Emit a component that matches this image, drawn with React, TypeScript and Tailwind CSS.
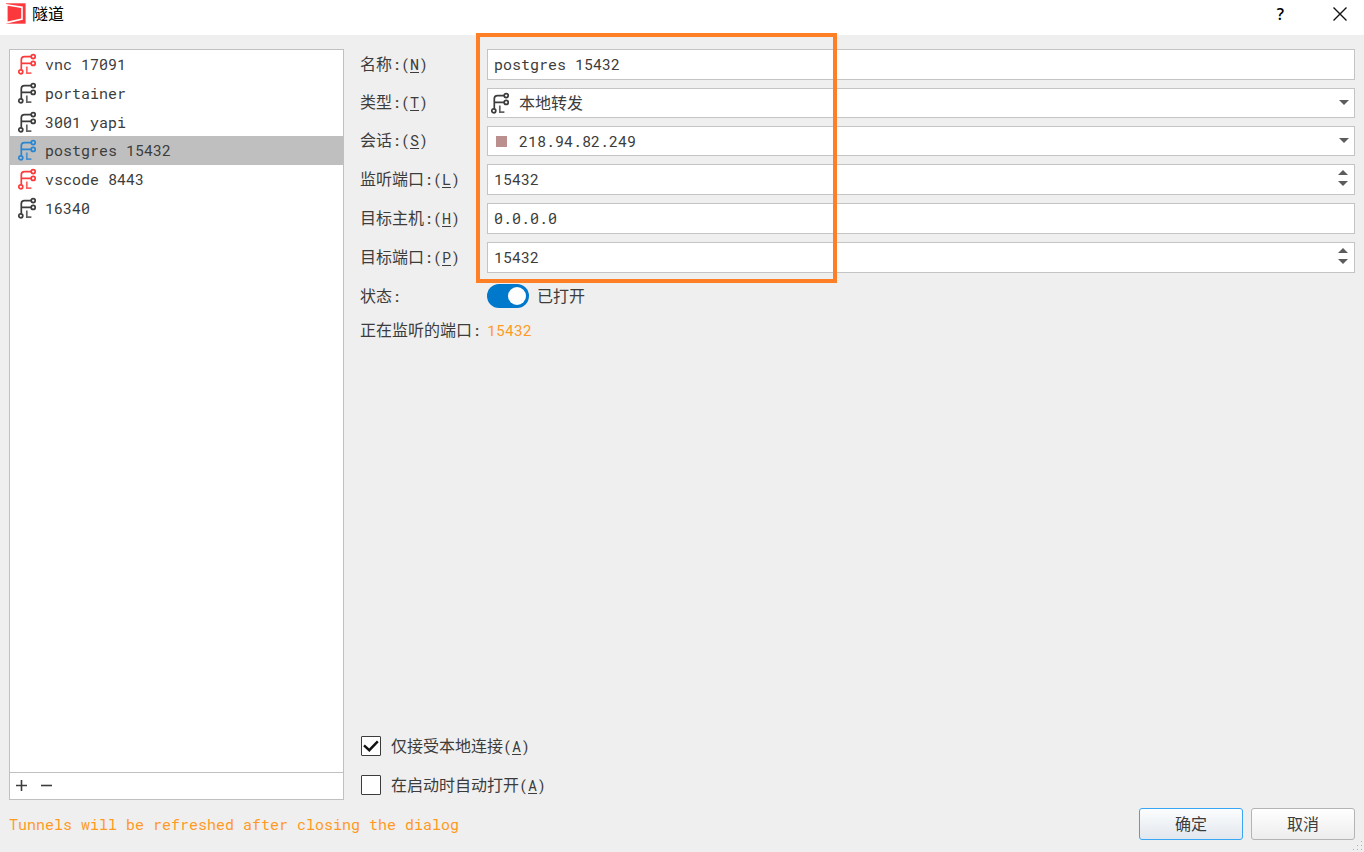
import { useState, type ReactNode } from "react";

type Tunnel = { name: string; color: string };

const tunnels: Tunnel[] = [
  { name: "vnc 17091", color: "text-[#fb3b3b]" },
  { name: "portainer", color: "text-[#3c3c3c]" },
  { name: "3001 yapi", color: "text-[#3c3c3c]" },
  { name: "postgres 15432", color: "text-[#2a86d2]" },
  { name: "vscode 8443", color: "text-[#fb3b3b]" },
  { name: "16340", color: "text-[#3c3c3c]" },
];

function TunnelIcon({ className }: { className: string }) {
  return (
    <svg viewBox="0 0 20 22" className={`h-[22px] w-5 shrink-0 ${className}`} fill="none" stroke="currentColor" strokeWidth="1.7" aria-hidden="true">
      <circle cx="15.2" cy="3.6" r="2" />
      <circle cx="15.2" cy="10.4" r="2" />
      <circle cx="2.8" cy="18.8" r="2" />
      <path d="M13.2 3.6H6.5Q3.3 3.6 3.3 6.8V16.8M3.3 10.4H13.2" />
      <path d="M8.8 13.4V20.2H13.4" strokeOpacity=".8" />
    </svg>
  );
}

function Arrow({ up = false }: { up?: boolean }) {
  return (
    <svg viewBox="0 0 10 5" className="h-[5px] w-[10px]" fill="#5c5c5c" aria-hidden="true">
      <path d={up ? "M0 5L5 0L10 5Z" : "M0 0L5 5L10 0Z"} />
    </svg>
  );
}

function Han({ children }: { children: ReactNode }) {
  return <span className="text-base leading-5">{children}</span>;
}

function Label({ id, text, mnemonic }: { id: string; text: string; mnemonic: string }) {
  return (
    <label htmlFor={id} className="pb-0.5 leading-5 whitespace-nowrap">
      <Han>{text}</Han>:(<span className="underline underline-offset-2">{mnemonic}</span>)
    </label>
  );
}

const box = "w-full min-w-0 border border-[#c4c4c4] bg-white text-[#3c3c3c] outline-none";

function TextField({ id, value }: { id: string; value: string }) {
  return <input id={id} defaultValue={value} className={`${box} h-[31px] px-[6px] pb-0.5`} />;
}

function SpinField({ id, value }: { id: string; value: number }) {
  const [port, setPort] = useState(String(value));
  const step = (by: number) => setPort(String(Number(port) + by));
  return (
    <div className={`${box} flex h-[31px] items-center pr-[6px]`}>
      <input id={id} inputMode="numeric" value={port} onChange={(e) => setPort(e.target.value)} className="min-w-0 flex-1 px-[6px] pb-0.5 outline-none" />
      <div className="flex flex-col gap-[6px] pb-1">
        <button type="button" aria-label="+1" onClick={() => step(1)}><Arrow up /></button>
        <button type="button" aria-label="-1" onClick={() => step(-1)}><Arrow /></button>
      </div>
    </div>
  );
}

function SelectField({ id, icon, value, large }: { id: string; icon: ReactNode; value: string; large?: boolean }) {
  return (
    <div className="relative flex items-center">
      <select id={id} className={`${box} h-[30px] appearance-none pr-6 pl-[31px] ${large ? "text-base" : ""}`}>
        <option>{value}</option>
      </select>
      <span className="pointer-events-none absolute left-1">{icon}</span>
      <span className="pointer-events-none absolute right-[6px] pb-0.5"><Arrow /></span>
    </div>
  );
}

function CheckField({ id, text, checked }: { id: string; text: string; checked: boolean }) {
  return (
    <div className="flex items-center gap-[10px]">
      <span className="relative flex size-5">
        <input id={id} type="checkbox" defaultChecked={checked} className="peer size-5 appearance-none rounded-[1px] border border-[#3c3c3c] bg-white" />
        <svg viewBox="0 0 20 20" className="pointer-events-none absolute inset-0 hidden size-5 peer-checked:block" fill="none" stroke="#111" strokeWidth="2.4" aria-hidden="true">
          <path d="M3 9.3L8.3 14.2L16.8 5.3" />
        </svg>
      </span>
      <label htmlFor={id} className="leading-5">
        <Han>{text}</Han>(<span className="underline underline-offset-2">A</span>)
      </label>
    </div>
  );
}

export default function App() {
  const [selected, setSelected] = useState(3);
  const [open, setOpen] = useState(true);

  return (
    <div className="flex min-h-screen flex-col bg-[#efefef] font-['Roboto_Mono','Liberation_Mono','Noto_Sans_CJK_SC',monospace] text-[15px] leading-5 text-[#3c3c3c]">
      <header className="flex h-[35px] items-center bg-white pb-2 pl-[6px] text-black">
        <svg viewBox="0 0 20 21" className="h-[21px] w-5" aria-hidden="true">
          <path d="M0 .3H19.6V20.7H0Z" fill="#fb383c" />
          <path d="M0 1L16.8 3.6V16.8L0 20.7Z" fill="#fff" />
          <path d="M1.6 2.8L15.2 4.9V15.6L1.6 18.6Z" fill="#fb383c" />
        </svg>
        <h1 className="ml-[6px] flex-1 text-base">隧道</h1>
        <button type="button" aria-label="帮助" className="w-[59px] text-center font-['Open_Sans',sans-serif] text-base font-semibold">?</button>
        <button type="button" aria-label="关闭" className="mr-[-5px] flex w-[59px] justify-center">
          <svg viewBox="0 0 14 14" className="size-[14px]" stroke="#111" strokeWidth="1.4" aria-hidden="true">
            <path d="M.5 .5L13.5 13.5M13.5 .5L.5 13.5" />
          </svg>
        </button>
      </header>

      <main className="flex flex-1 gap-4 px-[9px] pt-[14px]">
        <section className="flex w-[335px] shrink-0 flex-col border border-[#c0c0c0] bg-white">
          <ul className="grid h-[172px] grid-rows-6">
            {tunnels.map((t, i) => (
              <li key={t.name} className="flex">
                <button type="button" onClick={() => setSelected(i)} className={`flex flex-1 items-center gap-[7px] pl-2 text-left ${i === selected ? "bg-[#bfbfbf]" : ""}`}>
                  <TunnelIcon className={t.color} />
                  {t.name}
                </button>
              </li>
            ))}
          </ul>
          <div className="mt-auto flex h-[27px] items-center gap-[14px] border-t border-[#c0c0c0] pb-0.5 pl-[6px]">
            <button type="button" aria-label="添加">
              <svg viewBox="0 0 11 11" className="size-[11px]" stroke="#3c3c3c" strokeWidth="1.6" aria-hidden="true"><path d="M0 5.5H11M5.5 0V11" /></svg>
            </button>
            <button type="button" aria-label="删除">
              <svg viewBox="0 0 11 11" className="size-[11px]" stroke="#3c3c3c" strokeWidth="1.6" aria-hidden="true"><path d="M0 5.5H11" /></svg>
            </button>
          </div>
        </section>

        <form id="tunnel" className="flex min-w-0 flex-1 flex-col" onSubmit={(e) => e.preventDefault()}>
          <div className="relative grid grid-cols-[119px_1fr] items-center gap-x-2 gap-y-2">
            <Label id="name" text="名称" mnemonic="N" />
            <TextField id="name" value="postgres 15432" />
            <Label id="type" text="类型" mnemonic="T" />
            <SelectField id="type" large icon={<TunnelIcon className="text-[#3c3c3c]" />} value="本地转发" />
            <Label id="session" text="会话" mnemonic="S" />
            <SelectField id="session" icon={<span className="ml-[5px] block size-[11px] bg-[#bc8f8f]" />} value="218.94.82.249" />
            <Label id="listen" text="监听端口" mnemonic="L" />
            <SpinField id="listen" value={15432} />
            <Label id="host" text="目标主机" mnemonic="H" />
            <TextField id="host" value="0.0.0.0" />
            <Label id="target" text="目标端口" mnemonic="P" />
            <SpinField id="target" value={15432} />
            <div className="pointer-events-none absolute -top-4 -bottom-[10px] left-[116px] w-[361px] border-4 border-[#ff7f27]" />
          </div>
          <div className="mt-[11px] grid grid-cols-[119px_1fr] items-center gap-x-2 gap-y-3">
            <label htmlFor="state"><Han>状态</Han>:</label>
            <div className="flex items-center gap-2">
              <span className="relative flex h-6 w-[42px]">
                <input id="state" type="checkbox" role="switch" checked={open} onChange={() => setOpen(!open)} className="peer h-6 w-[42px] appearance-none rounded-full bg-[#a0a0a0] checked:bg-[#0078cc]" />
                <span className="pointer-events-none absolute top-[3px] left-[3px] size-[18px] rounded-full bg-white peer-checked:left-[21px]" />
              </span>
              <Han>{open ? "已打开" : "已关闭"}</Han>
            </div>
            <span className="whitespace-nowrap"><Han>正在监听的端口</Han>:</span>
            <output className="text-[#ff9a1f]">15432</output>
          </div>
          <div className="mt-auto mb-[5px] flex flex-col gap-[19px] pt-6 pl-px">
            <CheckField id="local-only" text="仅接受本地连接" checked />
            <CheckField id="auto-open" text="在启动时自动打开" checked={false} />
          </div>
        </form>
      </main>

      <footer className="relative flex h-[52px] items-center gap-2 px-[9px] pb-1">
        <p className="flex-1 text-[#ff9a1f]">Tunnels will be refreshed after closing the dialog</p>
        <button type="submit" form="tunnel" className="h-8 w-[104px] rounded-[3px] border border-[#38a6f5] bg-linear-to-b from-[#fcfdfe] to-[#e1e7ee] text-base">确定</button>
        <button type="button" className="h-8 w-[104px] rounded-[3px] border border-[#b4b4b4] bg-linear-to-b from-white to-[#ededed] text-base">取消</button>
        <svg viewBox="0 0 12 12" className="absolute right-0 bottom-0 size-3" fill="#b0b0b0" aria-hidden="true">
          <path d="M9 1h1v1h-1zM9 5h1v1h-1zM9 9h1v1h-1zM5 5h1v1h-1zM5 9h1v1h-1zM1 9h1v1h-1z" />
        </svg>
      </footer>
    </div>
  );
}
